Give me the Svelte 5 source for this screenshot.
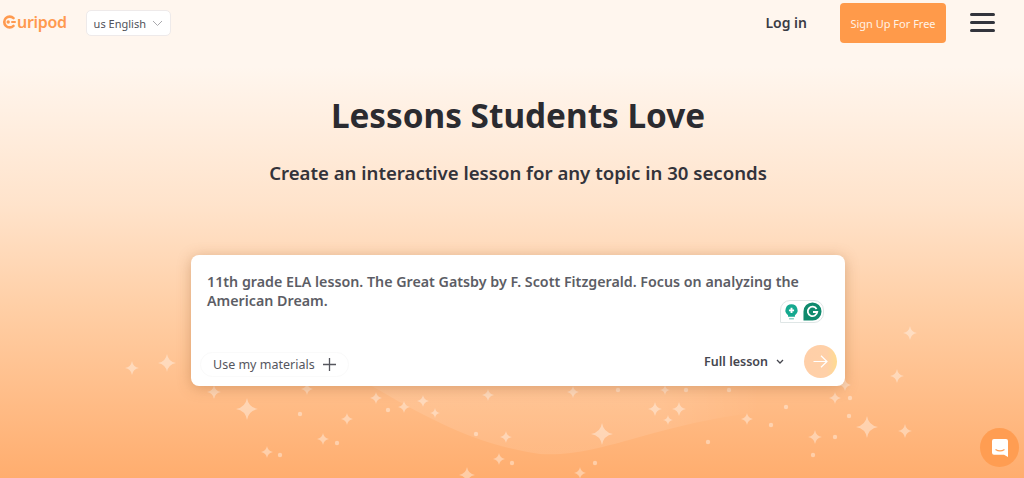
<script lang="ts">
  // [x, y, r] of the background sparkles
  const stars = [
    [132, 368, 7], [167, 363, 9], [214, 392, 7], [247, 409, 11], [347, 419, 6], [323, 439, 6],
    [267, 452, 6], [307, 389, 6], [376, 398, 6], [404, 407, 6], [423, 401, 6], [435, 413, 5],
    [488, 395, 6], [506, 437, 6], [499, 459, 6], [467, 475, 8], [573, 392, 6], [665, 390, 5],
    [655, 409, 7], [679, 409, 7], [668, 420, 5], [602, 434, 11], [747, 419, 6], [580, 473, 6],
    [835, 398, 6], [867, 427, 11], [905, 431, 7], [815, 437, 7], [897, 376, 7], [910, 333, 7],
    [845, 385, 6]
  ];
  const dots = [
    [300, 414], [337, 443], [280, 455], [388, 410], [476, 434], [618, 390], [686, 390], [729, 390],
    [771, 425], [708, 442], [595, 463], [512, 463], [786, 407], [850, 398], [849, 416], [835, 437],
    [813, 455]
  ];

  const sparkle = (x: number, y: number, r: number) => {
    const k = r * 0.14;
    return `M${x} ${y - r}Q${x + k} ${y - k} ${x + r} ${y}Q${x + k} ${y + k} ${x} ${y + r}Q${x - k} ${y + k} ${x - r} ${y}Q${x - k} ${y - k} ${x} ${y - r}Z`;
  };
</script>

<div class="page">
  <svg class="sky" viewBox="0 0 1024 478" width="1024" height="478" aria-hidden="true">
    <defs>
      <linearGradient id="wave" x1="0" x2="1" y1="0" y2="0">
        <stop offset="0" stop-color="#fff" stop-opacity="0.1" />
        <stop offset="0.75" stop-color="#fff" stop-opacity="0.1" />
        <stop offset="1" stop-color="#fff" stop-opacity="0" />
      </linearGradient>
    </defs>
    <path d="M370 385C430 420 480 446 540 454C600 458 650 425 760 412L760 385Z" fill="url(#wave)" />
    {#each stars as [x, y, r]}
      <path d={sparkle(x, y, r)} fill="#fff" opacity="0.38" />
    {/each}
    {#each dots as [x, y]}
      <circle cx={x} cy={y} r="2.2" fill="#fff" opacity="0.38" />
    {/each}
  </svg>

  <header class="topbar">
    <div class="topbar__left">
      <span class="logo">
        <svg width="15" height="14" viewBox="0 0 15 14" aria-hidden="true">
          <path d="M12.500 3.200A5.400 5.400 0 1 0 12.500 10.800" fill="none" stroke="#ff9a4f" stroke-width="2.600" stroke-linecap="round" />
          <circle cx="7.200" cy="7" r="1.700" fill="#ff9a4f" />
          <path d="M11 7h3" stroke="#ff9a4f" stroke-width="2" stroke-linecap="round" />
        </svg>
        uripod
      </span>
      <button class="lang">
        us English
        <svg width="11" height="7" viewBox="0 0 11 7"><path d="M1 1l4.500 4.500L10 1" fill="none" stroke="#a9a9ad" stroke-width="1" /></svg>
      </button>
    </div>
    <div class="topbar__right">
      <span class="login">Log in</span>
      <button class="signup">Sign Up For Free</button>
      <div class="burger"><i></i><i></i><i></i></div>
    </div>
  </header>

  <section class="hero">
    <h1>Lessons Students Love</h1>
    <h2>Create an interactive lesson for any topic in 30 seconds</h2>

    <div class="card">
      <p class="prompt">11th grade ELA lesson. The Great Gatsby by F. Scott Fitzgerald. Focus on analyzing the American Dream.</p>

      <div class="grammarly">
        <svg width="19" height="19" viewBox="0 0 20 20">
          <path d="M10 2.500a6.300 6.300 0 0 0-3.600 11.500v1.500h7.200V14A6.300 6.300 0 0 0 10 2.500z" fill="#15a98f" />
          <path d="M7.500 17h5v1.300h-5z" fill="#15a98f" opacity="0.6" />
          <path d="M10 6v5.500M7.300 8.800h5.400" stroke="#fff" stroke-width="2" />
        </svg>
        <svg width="19" height="19" viewBox="0 0 20 20">
          <path d="M10 .5a9.500 9.500 0 0 1 0 19H.5V10A9.500 9.500 0 0 1 10 .5z" fill="#0f8a6d" />
          <path d="M14.300 7.300A5 5 0 1 0 15 10.500H10.500" fill="none" stroke="#fff" stroke-width="1.900" />
        </svg>
      </div>

      <div class="card__foot">
        <button class="materials">
          Use my materials
          <svg width="13" height="13" viewBox="0 0 13 13"><path d="M6.500 0v13M0 6.500h13" stroke="#55565e" stroke-width="1.300" /></svg>
        </button>
        <div class="card__actions">
          <span class="mode">Full lesson
            <svg width="8" height="6" viewBox="0 0 8 6"><path d="M1 1l3 3 3-3" fill="none" stroke="#45464e" stroke-width="1.300" /></svg>
          </span>
          <button class="go" aria-label="Generate">
            <svg width="15" height="13" viewBox="0 0 15 13"><path d="M.5 6.500h13.500M8 .7l6 5.800-6 5.800" fill="none" stroke="#fff" stroke-width="1.200" /></svg>
          </button>
        </div>
      </div>
    </div>
  </section>

  <button class="chat" aria-label="Chat">
    <svg width="18" height="20" viewBox="0 0 18 20">
      <path d="M3 1h12a2 2 0 0 1 2 2v16l-4-2.300H3a2 2 0 0 1-2-2V3a2 2 0 0 1 2-2z" fill="#fff" />
      <path d="M4.500 11.500Q9 14.300 13.500 11.500" fill="none" stroke="#ff9d52" stroke-width="1.200" />
    </svg>
  </button>
</div>

<style>
  :global(body) {
    margin: 0;
  }

  .page {
    position: relative;
    width: 1024px;
    height: 478px;
    overflow: hidden;
    font-family: "Noto Sans", sans-serif;
    color: #2f2f36;
    background: linear-gradient(180deg, #fff6ee 0%, #fff6ee 14%, #ffe3cb 43%, #ffcfa6 64%, #ffbb85 85%, #ffad6e 100%);
  }

  button {
    font-family: inherit;
    border: 0;
    cursor: pointer;
  }

  .sky {
    position: absolute;
    inset: 0;
  }

  .topbar {
    position: relative;
    height: 44px;
    display: flex;
    align-items: center;
    justify-content: space-between;
    padding: 0 29px 0 1px;
  }

  .topbar__left {
    display: flex;
    align-items: center;
    gap: 19px;
  }

  .logo {
    display: flex;
    align-items: center;
    gap: 1px;
    font-size: 16px;
    font-weight: 600;
    color: #ff9a4f;
    letter-spacing: -0.3px;
  }

  .lang {
    height: 26px;
    width: 85px;
    margin-top: 2px;
    padding: 0;
    display: flex;
    align-items: center;
    justify-content: center;
    gap: 6px;
    font-size: 11px;
    color: #50515a;
    background: #fff;
    border: 1px solid #eeeaea;
    border-radius: 5px;
  }

  .topbar__right {
    display: flex;
    align-items: center;
  }

  .login {
    font-size: 14px;
    font-weight: 600;
    color: #3a3b44;
    margin-right: 33px;
  }

  .signup {
    width: 106px;
    height: 40px;
    margin: 2px 24px 0 0;
    font-size: 11px;
    color: #fff3e6;
    background: #ff9a4a;
    border-radius: 4px;
  }

  .burger {
    width: 25px;
    display: flex;
    flex-direction: column;
    gap: 5px;
  }

  .burger i {
    height: 3px;
    border-radius: 2px;
    background: #33343c;
  }

  .hero {
    position: relative;
    display: flex;
    flex-direction: column;
    align-items: center;
    padding-left: 12px;
  }

  h1 {
    margin: 49px 0 0;
    font-size: 33.300px;
    line-height: 44px;
    font-weight: 700;
    color: #2b2b30;
  }

  h2 {
    margin: 24px 0 0;
    font-size: 18.600px;
    line-height: 24px;
    font-weight: 600;
    color: #33333a;
  }

  .card {
    position: relative;
    box-sizing: border-box;
    width: 654px;
    height: 131px;
    margin-top: 70px;
    padding: 17px 17px 0 16px;
    display: flex;
    flex-direction: column;
    justify-content: space-between;
    background: #fff;
    border-radius: 8px;
    box-shadow: 0 2px 14px rgba(150, 90, 40, 0.35);
  }

  .prompt {
    margin: 0;
    font-size: 14.250px;
    line-height: 19px;
    font-weight: 600;
    color: #5c5d65;
  }

  .grammarly {
    position: absolute;
    top: 45px;
    right: 21px;
    display: flex;
    align-items: center;
    gap: 2px;
    padding: 1px;
    background: #fff;
    border: 1px solid #dfe6e6;
    border-radius: 10px 10px 10px 0;
  }

  .card__foot {
    display: flex;
    align-items: flex-end;
    justify-content: space-between;
    margin: 0 -9px 0 -7px;
    padding-bottom: 8px;
  }

  .materials {
    height: 25px;
    margin-bottom: 1px;
    padding: 0 12px;
    display: flex;
    align-items: center;
    gap: 8px;
    font-size: 12.500px;
    color: #55565e;
    background: #fff;
    border: 1px solid #fafafa;
    border-radius: 13px;
  }

  .card__actions {
    display: flex;
    align-items: center;
    gap: 20px;
  }

  .mode {
    display: flex;
    align-items: center;
    gap: 8px;
    font-size: 12.500px;
    font-weight: 600;
    color: #45464e;
  }

  .go {
    width: 33px;
    height: 33px;
    padding: 0;
    display: flex;
    align-items: center;
    justify-content: center;
    border-radius: 50%;
    background: linear-gradient(90deg, #ffcfa8 0%, #ffd0a8 70%, #ffdc90 100%);
  }

  .chat {
    position: absolute;
    right: 5px;
    bottom: 11px;
    width: 39px;
    height: 39px;
    padding: 0;
    display: flex;
    align-items: center;
    justify-content: center;
    border-radius: 50%;
    background: #ff9d52;
  }
</style>
